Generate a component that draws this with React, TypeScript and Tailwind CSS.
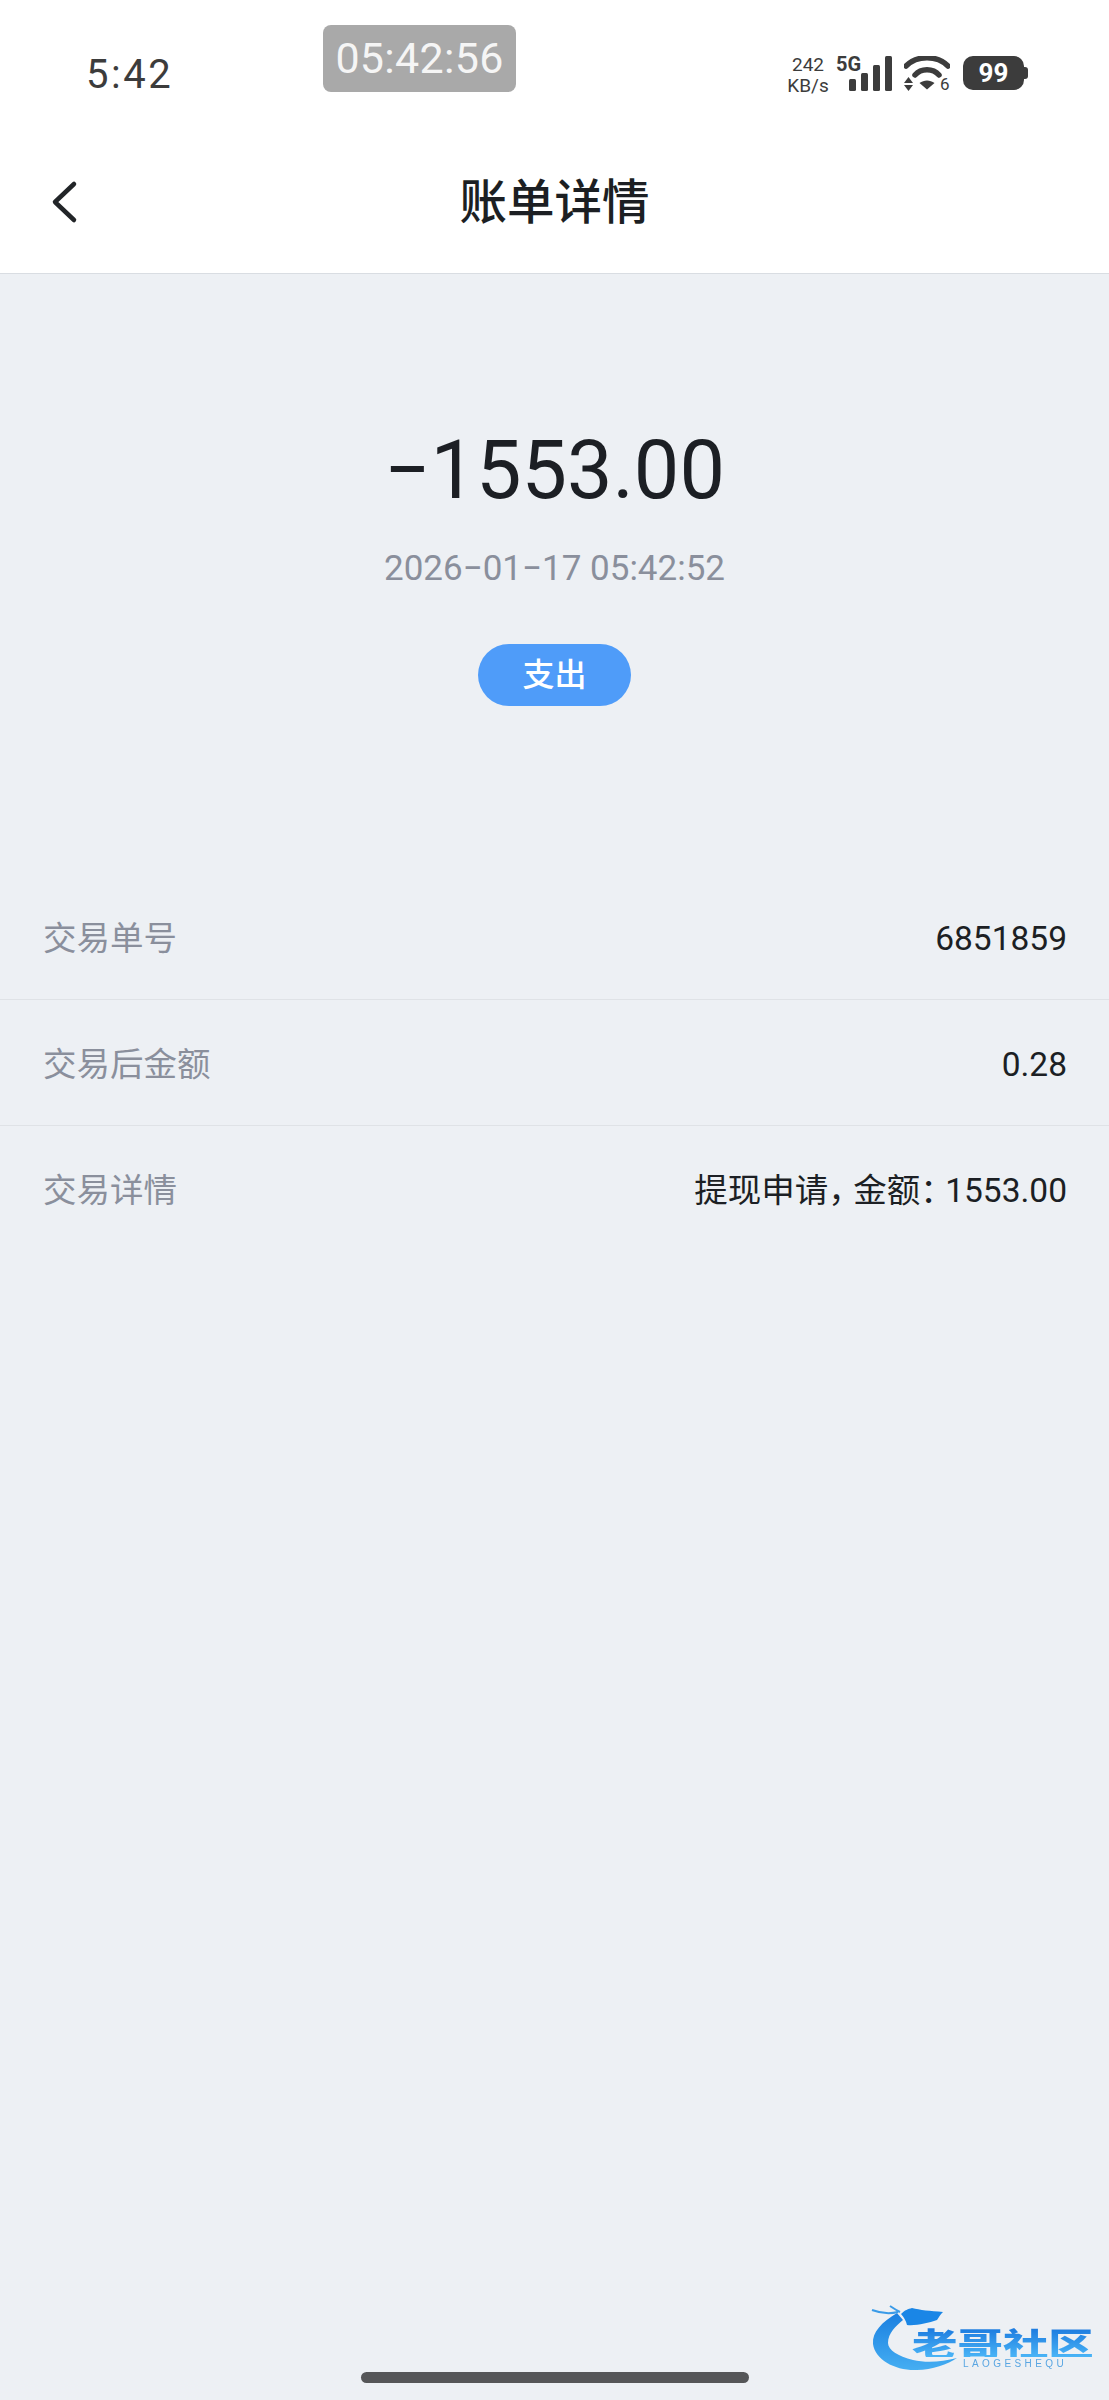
import React from 'react';

const rows = [
  { label: '交易单号', value: <>6851859</> },
  { label: '交易后金额', value: <>0.28</> },
  {
    label: '交易详情',
    value: (
      <>
        提现申请<span className="tracking-[-8.5px]">，</span>金额<span className="tracking-[-8.5px]">：</span>1553.00
      </>
    ),
  },
];

function StatusIcons() {
  return (
    <div className="flex items-start text-[#3c3c3c]">
      {/* network speed */}
      <div className="flex w-[44px] flex-col items-center text-[19px] leading-[21px] mt-[-2px]">
        <span>242</span>
        <span>KB/s</span>
      </div>

      {/* 5G + signal */}
      <div className="relative ml-[6px] h-[36px] w-[56px]">
        <span className="absolute left-0 top-[-3px] text-[20px] leading-[22px] font-bold">5G</span>
        <svg className="absolute left-[13px] top-0" width="43" height="35" viewBox="0 0 43 35" fill="currentColor">
          <rect x="0" y="23" width="7" height="12" rx="1.5" />
          <rect x="12" y="17" width="7" height="18" rx="1.5" />
          <rect x="24" y="9" width="7" height="26" rx="1.5" />
          <rect x="36" y="0" width="7" height="35" rx="1.5" />
        </svg>
      </div>

      {/* wifi */}
      <div className="relative ml-[12px] h-[36px] w-[46px]">
        <svg width="46" height="35" viewBox="0 0 46 35" fill="currentColor">
          <path d="M2 10 C13 -1 33 -1 44 10" fill="none" stroke="currentColor" strokeWidth="5.5" strokeLinecap="round" />
          <path d="M11 19 C17 12 29 12 35 19" fill="none" stroke="currentColor" strokeWidth="5.5" strokeLinecap="round" />
          <path d="M15.5 27 C20 23.5 26 23.5 30.5 27 L23 33.5 Z" />
          <path d="M4.5 21 L9 27 L0 27 Z" />
          <path d="M0 29 L9 29 L4.5 35 Z" />
        </svg>
        <span className="absolute left-[36px] top-[20px] text-[17px] leading-[17px]">6</span>
      </div>

      {/* battery */}
      <div className="ml-[13px] flex items-center">
        <div className="flex h-[34px] w-[61px] items-center justify-center rounded-[10px] bg-[#3c3c3c] text-[26px] font-bold leading-none text-white">
          99
        </div>
        <div className="h-[12px] w-[4px] rounded-r-[3px] bg-[#3c3c3c]" />
      </div>
    </div>
  );
}

function Watermark() {
  return (
    <div className="absolute left-[868px] top-[2302px] h-[72px] w-[232px] blur-[0.6px]">
      <svg className="absolute left-0 top-0" width="110" height="72" viewBox="0 0 110 72">
        <defs>
          <linearGradient id="swoosh" x1="0" y1="0" x2="0" y2="1">
            <stop offset="0" stopColor="#1a7fe0" />
            <stop offset="1" stopColor="#45aef2" />
          </linearGradient>
        </defs>
        {/* dragon body */}
        <path
          d="M29 11 C14 20 4 30 5 42 C7 58 28 69 49 68 C64 68 80 62 89 56 C74 60 58 61 45 58 C30 54 20 48 20 41 C20 31 28 24 35 18 Z"
          fill="url(#swoosh)"
        />
        {/* dragon head */}
        <path
          d="M33 12 C37 8 40 7 44 6 C52 8 62 9 75 10 C72 13 71 15 69 18 C60 21 48 24 39 23 C38 19 36 15 33 12 Z"
          fill="#1a86e6"
        />
        <path d="M4 8 C12 11 22 12 30 10 M22 4 C25 6 28 8 32 10" fill="none" stroke="#3a9be8" strokeWidth="2" />
      </svg>
      <div className="absolute left-[44px] top-[25px] origin-left scale-x-[1.42] bg-gradient-to-b from-[#1b78de] to-[#4ab4f6] bg-clip-text text-[32px] font-black leading-[30px] text-transparent font-['Noto_Sans_CJK_SC',sans-serif] whitespace-nowrap">
        老哥社区
      </div>
      <div className="absolute left-[95px] top-[57px] text-[10px] leading-[10px] tracking-[3.4px] text-[#5aa6e2] whitespace-nowrap font-['Liberation_Sans',sans-serif]">
        LAOGESHEQU
      </div>
    </div>
  );
}

export default function App() {
  return (
    <div className="relative flex min-h-[2400px] w-full flex-col bg-[#edf0f4] font-[Roboto,'Noto_Sans_CJK_SC',sans-serif]">
      <header className="h-[274px] border-b border-[#d9dde2] bg-white">
        {/* status bar */}
        <div className="flex h-[136px] items-start pt-[25px]">
          <div className="ml-[86px] mt-[26px] w-[88px] text-[40px] font-normal leading-[48px] tracking-[2.5px] text-[#3c3c3c]">
            5:42
          </div>
          <div className="ml-[149px] flex h-[67px] w-[193px] items-center justify-center rounded-[8px] bg-[#a9a9a9] text-[43px] leading-none tracking-[0.3px] text-[#f5f5f5]">
            05:42:56
          </div>
          <div className="ml-auto mr-[81px] mt-[31px]">
            <StatusIcons />
          </div>
        </div>

        {/* nav bar */}
        <div className="relative flex h-[137px] items-center justify-center">
          <svg className="absolute left-[50px] top-[44px]" width="30" height="44" viewBox="0 0 30 44" fill="none">
            <path d="M24 4 L5 22 L24 40" stroke="#222528" strokeWidth="4.5" strokeLinecap="round" strokeLinejoin="round" />
          </svg>
          <h1 className="mb-[2px] text-[47.5px] font-medium leading-none text-[#1c1f23]">账单详情</h1>
        </div>
      </header>

      {/* amount */}
      <section className="flex flex-col items-center">
        <div className="mt-[147px] text-[81px] font-normal leading-[100px] text-[#1c1f24]">−1553.00</div>
        <div className="mt-[27px] text-[35px] leading-[42px] text-[#8a8f9c]">2026−01−17 05:42:52</div>
        <div className="mt-[54px] flex h-[62px] w-[153px] items-center justify-center rounded-full bg-[#4f9cf9] text-[32px] font-medium leading-none text-white">
          支出
        </div>
      </section>

      {/* detail rows */}
      <section className="mt-[168px]">
        {rows.map((row, index) => (
          <div
            key={row.label}
            className={`flex h-[126px] items-center justify-between pl-[43px] pr-[42px] pt-[4px] ${
              index !== rows.length - 1 ? 'border-b border-[#dfe2e6]' : ''
            }`}
          >
            <span className="text-[33.5px] leading-none text-[#8a8f9c]">{row.label}</span>
            <span className="text-[33.5px] leading-none text-[#1c1f24]">{row.value}</span>
          </div>
        ))}
      </section>

      {/* home indicator */}
      <div className="mt-auto flex justify-center pb-[17px]">
        <div className="h-[11px] w-[388px] rounded-full bg-[#555658]" />
      </div>

      <Watermark />
    </div>
  );
}
